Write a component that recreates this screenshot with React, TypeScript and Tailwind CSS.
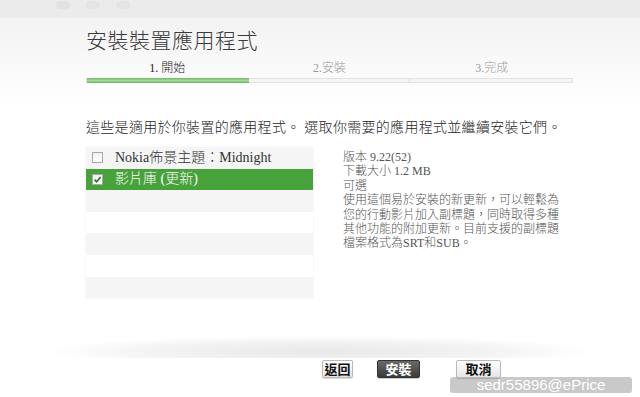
import React from 'react';

const body = { fontFamily: '"Liberation Serif", "Noto Sans CJK TC", serif' };

function Checkbox({ checked }: { checked?: boolean }) {
  return (
    <span className="flex h-[11px] w-[11px] items-center justify-center border border-[#a9a9a9] bg-[linear-gradient(to_bottom,#f0f0f0,#ffffff)]">
      {checked && (
        <svg width="9" height="9" viewBox="0 0 9 9">
          <path d="M1.5 4.6 L3.6 6.8 L7.6 2" fill="none" stroke="#2f6b2a" strokeWidth="1.6" />
        </svg>
      )}
    </span>
  );
}

const rows = [
  { label: 'Nokia佈景主題：Midnight' },
  { label: '影片庫 (更新)', checked: true },
  {},
  {},
  {},
  {},
  {},
];

export default function App() {
  return (
    <div
      className="relative h-[397px] w-[640px] overflow-hidden bg-[linear-gradient(to_bottom,#ebebeb_0px,#ebebeb_17px,#f3f3f3_18px,#ffffff_105px)] font-light text-[#333]"
      style={body}
    >
      {/* faint toolbar */}
      <div className="flex h-[18px] items-start gap-[16px] pl-[56px]">
        <span className="mt-[1px] h-[8px] w-[14px] rounded-sm bg-[#e2e2e2]" />
        <span className="mt-[1px] h-[8px] w-[14px] rounded-full bg-[#e4e4e4]" />
        <span className="mt-[1px] h-[8px] w-[14px] rounded-sm bg-[#e4e4e4]" />
      </div>

      <div className="pl-[86px]">
        <h1
          className="mt-[9px] h-[24px] text-[21px] font-light leading-[24px] tracking-[0.5px] text-[#3a3a3a]"
          style={{ fontFamily: '"Noto Sans CJK TC", sans-serif' }}
        >
          安裝裝置應用程式
        </h1>

        <div className="mt-[11px] grid w-[487px] grid-cols-3 text-center text-[12px] leading-[12px]">
          <span className="text-[#222]">1. 開始</span>
          <span className="text-[#9a9a9a]">2.安裝</span>
          <span className="text-[#9a9a9a]">3.完成</span>
        </div>

        <div className="mt-[4px] grid h-[5px] w-[487px] grid-cols-3 border border-[#e3e3e3] bg-[#f4f4f4]">
          <div className="-my-px bg-[linear-gradient(to_bottom,#6fb466,#a6da98_50%,#6cb35f)]" />
          <div className="border-r border-[#dcdcdc]" />
          <div />
        </div>

        <p className="mt-[36px] text-[14px] leading-[18px] tracking-[0.3px] text-[#1e1e1e]">
          這些是適用於你裝置的應用程式。 選取你需要的應用程式並繼續安裝它們。
        </p>

        <div className="mt-[10px] flex">
          <div className="w-[227px] shadow-[0_0_3px_rgba(0,0,0,0.06)]">
            {rows.map((r, i) => (
              <div
                key={i}
                className={
                  'flex h-[21.6px] items-center gap-[12px] pl-[6px] text-[14px] ' +
                  (r.checked ? 'bg-[#47a23c] text-white' : i % 2 === 0 ? 'bg-[#f5f5f5]' : 'bg-white')
                }
              >
                {r.label && <Checkbox checked={r.checked} />}
                {r.label && <span className="leading-[18px]">{r.label}</span>}
              </div>
            ))}
          </div>

          <div className="ml-[30px] mt-[3px] text-[12px] leading-[14.4px] text-[#555]">
            <p>版本 9.22(52)</p>
            <p>下載大小 1.2 MB</p>
            <p>可選</p>
            <p>
              使用這個易於安裝的新更新，可以輕鬆為
              <br />
              您的行動影片加入副標題，同時取得多種
              <br />
              其他功能的附加更新。目前支援的副標題
              <br />
              檔案格式為SRT和SUB。
            </p>
          </div>
        </div>
      </div>

      {/* bottom shade */}
      <div className="mx-[50px] mt-[38px] h-[22px] bg-[radial-gradient(ellipse_at_50%_70%,#e8e8e8_0%,#f3f3f3_45%,rgba(255,255,255,0)_72%)]" />

      <div
        className="relative z-10 mt-[2px] flex pl-[322px] text-[13px] font-bold leading-[16px]"
        style={{ fontFamily: '"Noto Sans CJK TC", sans-serif' }}
      >
        <button className="h-[18px] w-[31px] rounded-[2px] border border-[#b9b9b9] bg-[linear-gradient(to_bottom,#ffffff,#e6e6e6)] text-[#111] shadow-[0_1px_1px_rgba(0,0,0,0.15)]">
          返回
        </button>
        <button className="ml-[24px] h-[18px] w-[43px] rounded-[2px] border border-[#333] bg-[linear-gradient(to_bottom,#6a6a6a,#3a3a3a)] text-white shadow-[0_1px_1px_rgba(0,0,0,0.2)]">
          安裝
        </button>
        <button className="ml-[36px] h-[18px] w-[45px] rounded-[2px] border border-[#b9b9b9] bg-[linear-gradient(to_bottom,#ffffff,#e6e6e6)] text-[#111] shadow-[0_1px_1px_rgba(0,0,0,0.15)]">
          取消
        </button>
      </div>

      <div
        className="absolute left-[450px] top-[377px] flex h-[16px] w-[182px] items-center justify-center rounded-[3px] bg-[#c9c9c9] text-[15px] font-normal leading-[16px] text-white"
        style={{ fontFamily: '"Liberation Sans", sans-serif' }}
      >
        sedr55896@ePrice
      </div>
    </div>
  );
}
